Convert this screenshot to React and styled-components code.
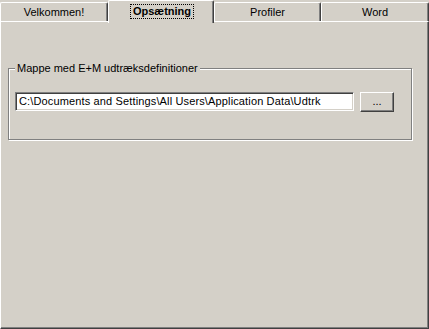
import React from "react";
import styled, { createGlobalStyle } from "styled-components";

const Global = createGlobalStyle`
  html, body { margin: 0; padding: 0; background: #d4d0c8; }
  body { font-family: "Liberation Sans", Arial, sans-serif; font-size: 11px; color: #000; }
`;

const Window = styled.div`
  width: 429px;
  height: 329px;
  background: #d4d0c8;
  overflow: hidden;
  display: flex;
  flex-direction: column;
`;

const TabStrip = styled.div`
  display: flex;
  height: 21px;
  align-items: flex-start;
`;

const Tab = styled.div`
  box-sizing: border-box;
  width: ${(p) => p.$w}px;
  height: ${(p) => (p.$active ? 23 : 19)}px;
  margin-top: ${(p) => (p.$active ? 0 : 2)}px;
  margin-bottom: ${(p) => (p.$active ? -2 : 0)}px;
  position: relative;
  z-index: ${(p) => (p.$active ? 2 : 1)};
  background: #d4d0c8;
  border-top: 1px solid #fff;
  border-left: 1px solid #fff;
  border-right: 1px solid #404040;
  border-top-left-radius: 2px;
  border-top-right-radius: 2px;
  box-shadow: inset -1px 0 0 #808080;
  display: flex;
  justify-content: center;
  padding-top: ${(p) => (p.$active ? 3 : 3)}px;
  font-weight: ${(p) => (p.$active ? "bold" : "normal")};
  line-height: 13px;
`;

const Focus = styled.span`
  border: 1px dotted #000;
  padding: 0 2px;
  height: 13px;
  margin-left: 2px;
`;

const Panel = styled.div`
  flex: 1;
  box-sizing: border-box;
  border-top: 1px solid #fff;
  border-left: 1px solid #fff;
  border-right: 1px solid #404040;
  border-bottom: 1px solid #404040;
  box-shadow: inset -1px -1px 0 #808080;
  padding: 46px 16px 0 7px;
`;

const GroupBox = styled.div`
  position: relative;
  box-sizing: border-box;
  height: 72px;
  width: 404px;
  border: 1px solid #808080;
  box-shadow: inset 1px 1px 0 #fff, 1px 1px 0 #fff;
  padding: 23px 0 0 6px;
  display: flex;
  align-items: flex-start;
  gap: 6px;
`;

const Caption = styled.span`
  position: absolute;
  top: -7px;
  left: 6px;
  padding: 0 2px;
  background: #d4d0c8;
  line-height: 13px;
`;

const TextField = styled.div`
  box-sizing: border-box;
  width: 339px;
  height: 19px;
  background: #fff;
  border-top: 1px solid #808080;
  border-left: 1px solid #808080;
  border-right: 1px solid #fff;
  border-bottom: 1px solid #fff;
  box-shadow: inset 1px 1px 0 #404040, inset -1px -1px 0 #d4d0c8;
  padding: 2px 0 0 3px;
  line-height: 13px;
  letter-spacing: 0.14px;
  white-space: nowrap;
  overflow: hidden;
`;

const Button = styled.div`
  box-sizing: border-box;
  width: 34px;
  height: 20px;
  background: #d4d0c8;
  border-top: 1px solid #fff;
  border-left: 1px solid #fff;
  border-right: 1px solid #404040;
  border-bottom: 1px solid #404040;
  box-shadow: inset -1px -1px 0 #808080;
  display: flex;
  justify-content: center;
  align-items: center;
  line-height: 13px;
  padding-bottom: 2px;
`;

const tabs = [
  { label: "Velkommen!", w: 108 },
  { label: "Opsætning", w: 106, active: true },
  { label: "Profiler", w: 107 },
  { label: "Word", w: 108 },
];

export default function App() {
  return (
    <>
      <Global />
      <Window>
        <TabStrip>
          {tabs.map((t) => (
            <Tab key={t.label} $w={t.w} $active={t.active}>
              {t.active ? <Focus>{t.label}</Focus> : t.label}
            </Tab>
          ))}
        </TabStrip>
        <Panel>
          <GroupBox>
            <Caption>Mappe med E+M udtræksdefinitioner</Caption>
            <TextField>C:\Documents and Settings\All Users\Application Data\Udtrk</TextField>
            <Button>...</Button>
          </GroupBox>
        </Panel>
      </Window>
    </>
  );
}
